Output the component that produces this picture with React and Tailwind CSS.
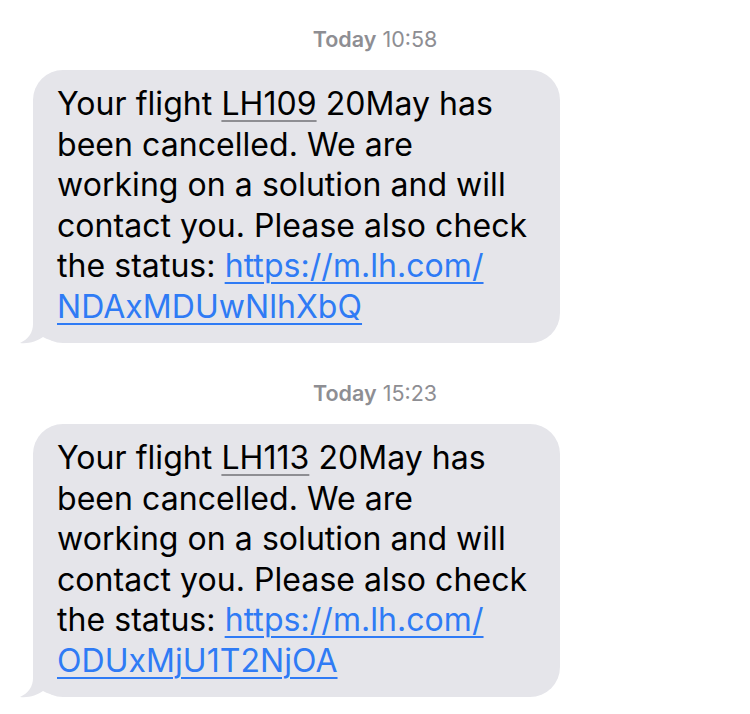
import React from "react";

function Tail() {
  return (
    <svg
      className="absolute left-[-13px] bottom-[-1px]"
      width="44"
      height="34"
      viewBox="0 0 44 34"
    >
      <path
        d="M13 0 L13 14 C13 22 9 29 0 33 C9 34 17 31 23 27 C28 30 34 31 44 31 L44 0 Z"
        fill="#e5e5ea"
      />
    </svg>
  );
}

function Bubble({ flight, code }) {
  return (
    <div className="relative ml-[33px] w-[527px] rounded-[30px] bg-[#e5e5ea] pl-[24px] pt-[14px] pb-[16px]">
      <Tail />
      <div className="relative text-[32px] leading-[40.5px] text-black tracking-[0.05px]">
        <div>
          Your flight{" "}
          <span className="underline decoration-[#8e8e93] decoration-[2px] underline-offset-[5px]">
            {flight}
          </span>{" "}
          20May has
        </div>
        <div>been cancelled. We are</div>
        <div>working on a solution and will</div>
        <div>contact you. Please also check</div>
        <div>
          the status:{" "}
          <span className="text-[#2f7bf5] underline decoration-[2px] underline-offset-[5px]">
            https://m.lh.com/
          </span>
        </div>
        <div>
          <span className="text-[#2f7bf5] underline decoration-[2px] underline-offset-[5px]">
            {code}
          </span>
        </div>
      </div>
    </div>
  );
}

function Stamp({ time }) {
  return (
    <div className="text-center text-[21.5px] leading-[24px] text-[#8e8e93]">
      <span className="font-semibold">Today</span> {time}
    </div>
  );
}

export default function App() {
  return (
    <div
      className="w-[750px] h-[714px] bg-white overflow-hidden pt-[27px]"
      style={{ fontFamily: "Inter, 'Noto Sans', sans-serif" }}
    >
      <Stamp time="10:58" />
      <div className="mt-[19px]">
        <Bubble flight="LH109" code="NDAxMDUwNlhXbQ" />
      </div>
      <div className="mt-[38px]">
        <Stamp time="15:23" />
      </div>
      <div className="mt-[19px]">
        <Bubble flight="LH113" code="ODUxMjU1T2NjOA" />
      </div>
    </div>
  );
}
